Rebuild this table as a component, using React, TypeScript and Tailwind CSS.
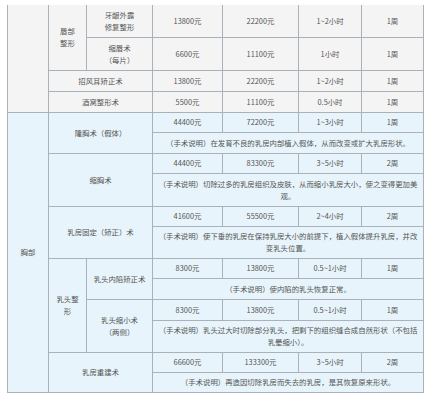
import React from 'react';

type PriceRow = {
  low: string;
  high: string;
  time: string;
  rest: string;
};

const cell = 'border border-[#aab1b8] px-[3px] text-center align-middle leading-[12px]';

function Prices({ row }: { row: PriceRow }) {
  return (
    <>
      <td className={cell}>{row.low}</td>
      <td className={cell}>{row.high}</td>
      <td className={cell}>{row.time}</td>
      <td className={cell}>{row.rest}</td>
    </>
  );
}

function Desc({ lines }: { lines: string[] }) {
  return (
    <td colSpan={4} className={`${cell} whitespace-nowrap`}>
      {lines.map((line, i) => (
        <React.Fragment key={i}>
          {i > 0 && <br />}
          {line}
        </React.Fragment>
      ))}
    </td>
  );
}

export default function App() {
  return (
    <div className="min-h-[400px] w-[427px] bg-white pt-[5px] pl-[7px]">
      <table className="w-[416px] table-fixed border-collapse text-[7.4px] text-[#545454] font-['Noto_Sans_CJK_SC','Noto_Sans',sans-serif]">
        <colgroup>
          <col className="w-[41px]" />
          <col className="w-[38px]" />
          <col className="w-[66px]" />
          <col className="w-[70px]" />
          <col className="w-[76px]" />
          <col className="w-[63px]" />
          <col className="w-[62px]" />
        </colgroup>
        <tbody>
          {/* face section */}
          <tr className="h-[32px] bg-[#f4f4f4]">
            <td rowSpan={4} className={`${cell} border-t-0`} />
            <td rowSpan={2} className={`${cell} border-t-0`}>
              唇部
              <br />
              整形
            </td>
            <td className={`${cell} border-t-0`}>
              牙龈外露
              <br />
              修复整形
            </td>
            <td className={`${cell} border-t-0`}>13800元</td>
            <td className={`${cell} border-t-0`}>22200元</td>
            <td className={`${cell} border-t-0`}>1~2小时</td>
            <td className={`${cell} border-t-0`}>1周</td>
          </tr>
          <tr className="h-[33px] bg-[#f4f4f4]">
            <td className={cell}>
              缩唇术
              <br />
              （每片）
            </td>
            <Prices row={{ low: '6600元', high: '11100元', time: '1小时', rest: '1周' }} />
          </tr>
          <tr className="h-[21px] bg-[#f4f4f4]">
            <td colSpan={2} className={cell}>招风耳矫正术</td>
            <Prices row={{ low: '13800元', high: '22200元', time: '1~2小时', rest: '1周' }} />
          </tr>
          <tr className="h-[21px] bg-[#f4f4f4]">
            <td colSpan={2} className={cell}>酒窝整形术</td>
            <Prices row={{ low: '5500元', high: '11100元', time: '0.5小时', rest: '1周' }} />
          </tr>

          {/* chest section */}
          <tr className="h-[20px] bg-[#e8f4fb]">
            <td rowSpan={12} className={cell}>胸部</td>
            <td colSpan={2} rowSpan={2} className={cell}>隆胸术（假体）</td>
            <Prices row={{ low: '44400元', high: '72200元', time: '1~3小时', rest: '1周' }} />
          </tr>
          <tr className="h-[21px] bg-[#e8f4fb]">
            <Desc lines={['（手术说明）在发育不良的乳房内部植入假体，从而改变或扩大乳房形状。']} />
          </tr>
          <tr className="h-[20px] bg-[#e8f4fb]">
            <td colSpan={2} rowSpan={2} className={cell}>缩胸术</td>
            <Prices row={{ low: '44400元', high: '83300元', time: '3~5小时', rest: '2周' }} />
          </tr>
          <tr className="h-[33px] bg-[#e8f4fb]">
            <Desc
              lines={[
                '（手术说明）切除过多的乳房组织及皮肤，从而缩小乳房大小，使之变得更加美',
                '观。',
              ]}
            />
          </tr>
          <tr className="h-[20px] bg-[#e8f4fb]">
            <td colSpan={2} rowSpan={2} className={cell}>乳房固定（矫正）术</td>
            <Prices row={{ low: '41600元', high: '55500元', time: '2~4小时', rest: '2周' }} />
          </tr>
          <tr className="h-[32px] bg-[#e8f4fb]">
            <Desc
              lines={[
                '（手术说明）使下垂的乳房在保持乳房大小的前提下，植入假体提升乳房，并改',
                '变乳头位置。',
              ]}
            />
          </tr>
          <tr className="h-[20px] bg-[#e8f4fb]">
            <td rowSpan={4} className={cell}>
              乳头整
              <br />
              形
            </td>
            <td rowSpan={2} className={cell}>乳头内陷矫正术</td>
            <Prices row={{ low: '8300元', high: '13800元', time: '0.5~1小时', rest: '1周' }} />
          </tr>
          <tr className="h-[21px] bg-[#e8f4fb]">
            <Desc lines={['（手术说明）使内陷的乳头恢复正常。']} />
          </tr>
          <tr className="h-[21px] bg-[#e8f4fb]">
            <td rowSpan={2} className={cell}>
              乳头缩小术
              <br />
              （两侧）
            </td>
            <Prices row={{ low: '8300元', high: '13800元', time: '0.5~1小时', rest: '1周' }} />
          </tr>
          <tr className="h-[32px] bg-[#e8f4fb]">
            <Desc
              lines={[
                '（手术说明）乳头过大时切除部分乳头，把剩下的组织缝合成自然形状（不包括',
                '乳晕缩小）。',
              ]}
            />
          </tr>
          <tr className="h-[20px] bg-[#e8f4fb]">
            <td colSpan={2} rowSpan={2} className={cell}>乳房重建术</td>
            <Prices row={{ low: '66600元', high: '133300元', time: '3~5小时', rest: '2周' }} />
          </tr>
          <tr className="h-[20px] bg-[#e8f4fb]">
            <Desc lines={['（手术说明）再造因切除乳房而失去的乳房，是其恢复原来形状。']} />
          </tr>
        </tbody>
      </table>
    </div>
  );
}
